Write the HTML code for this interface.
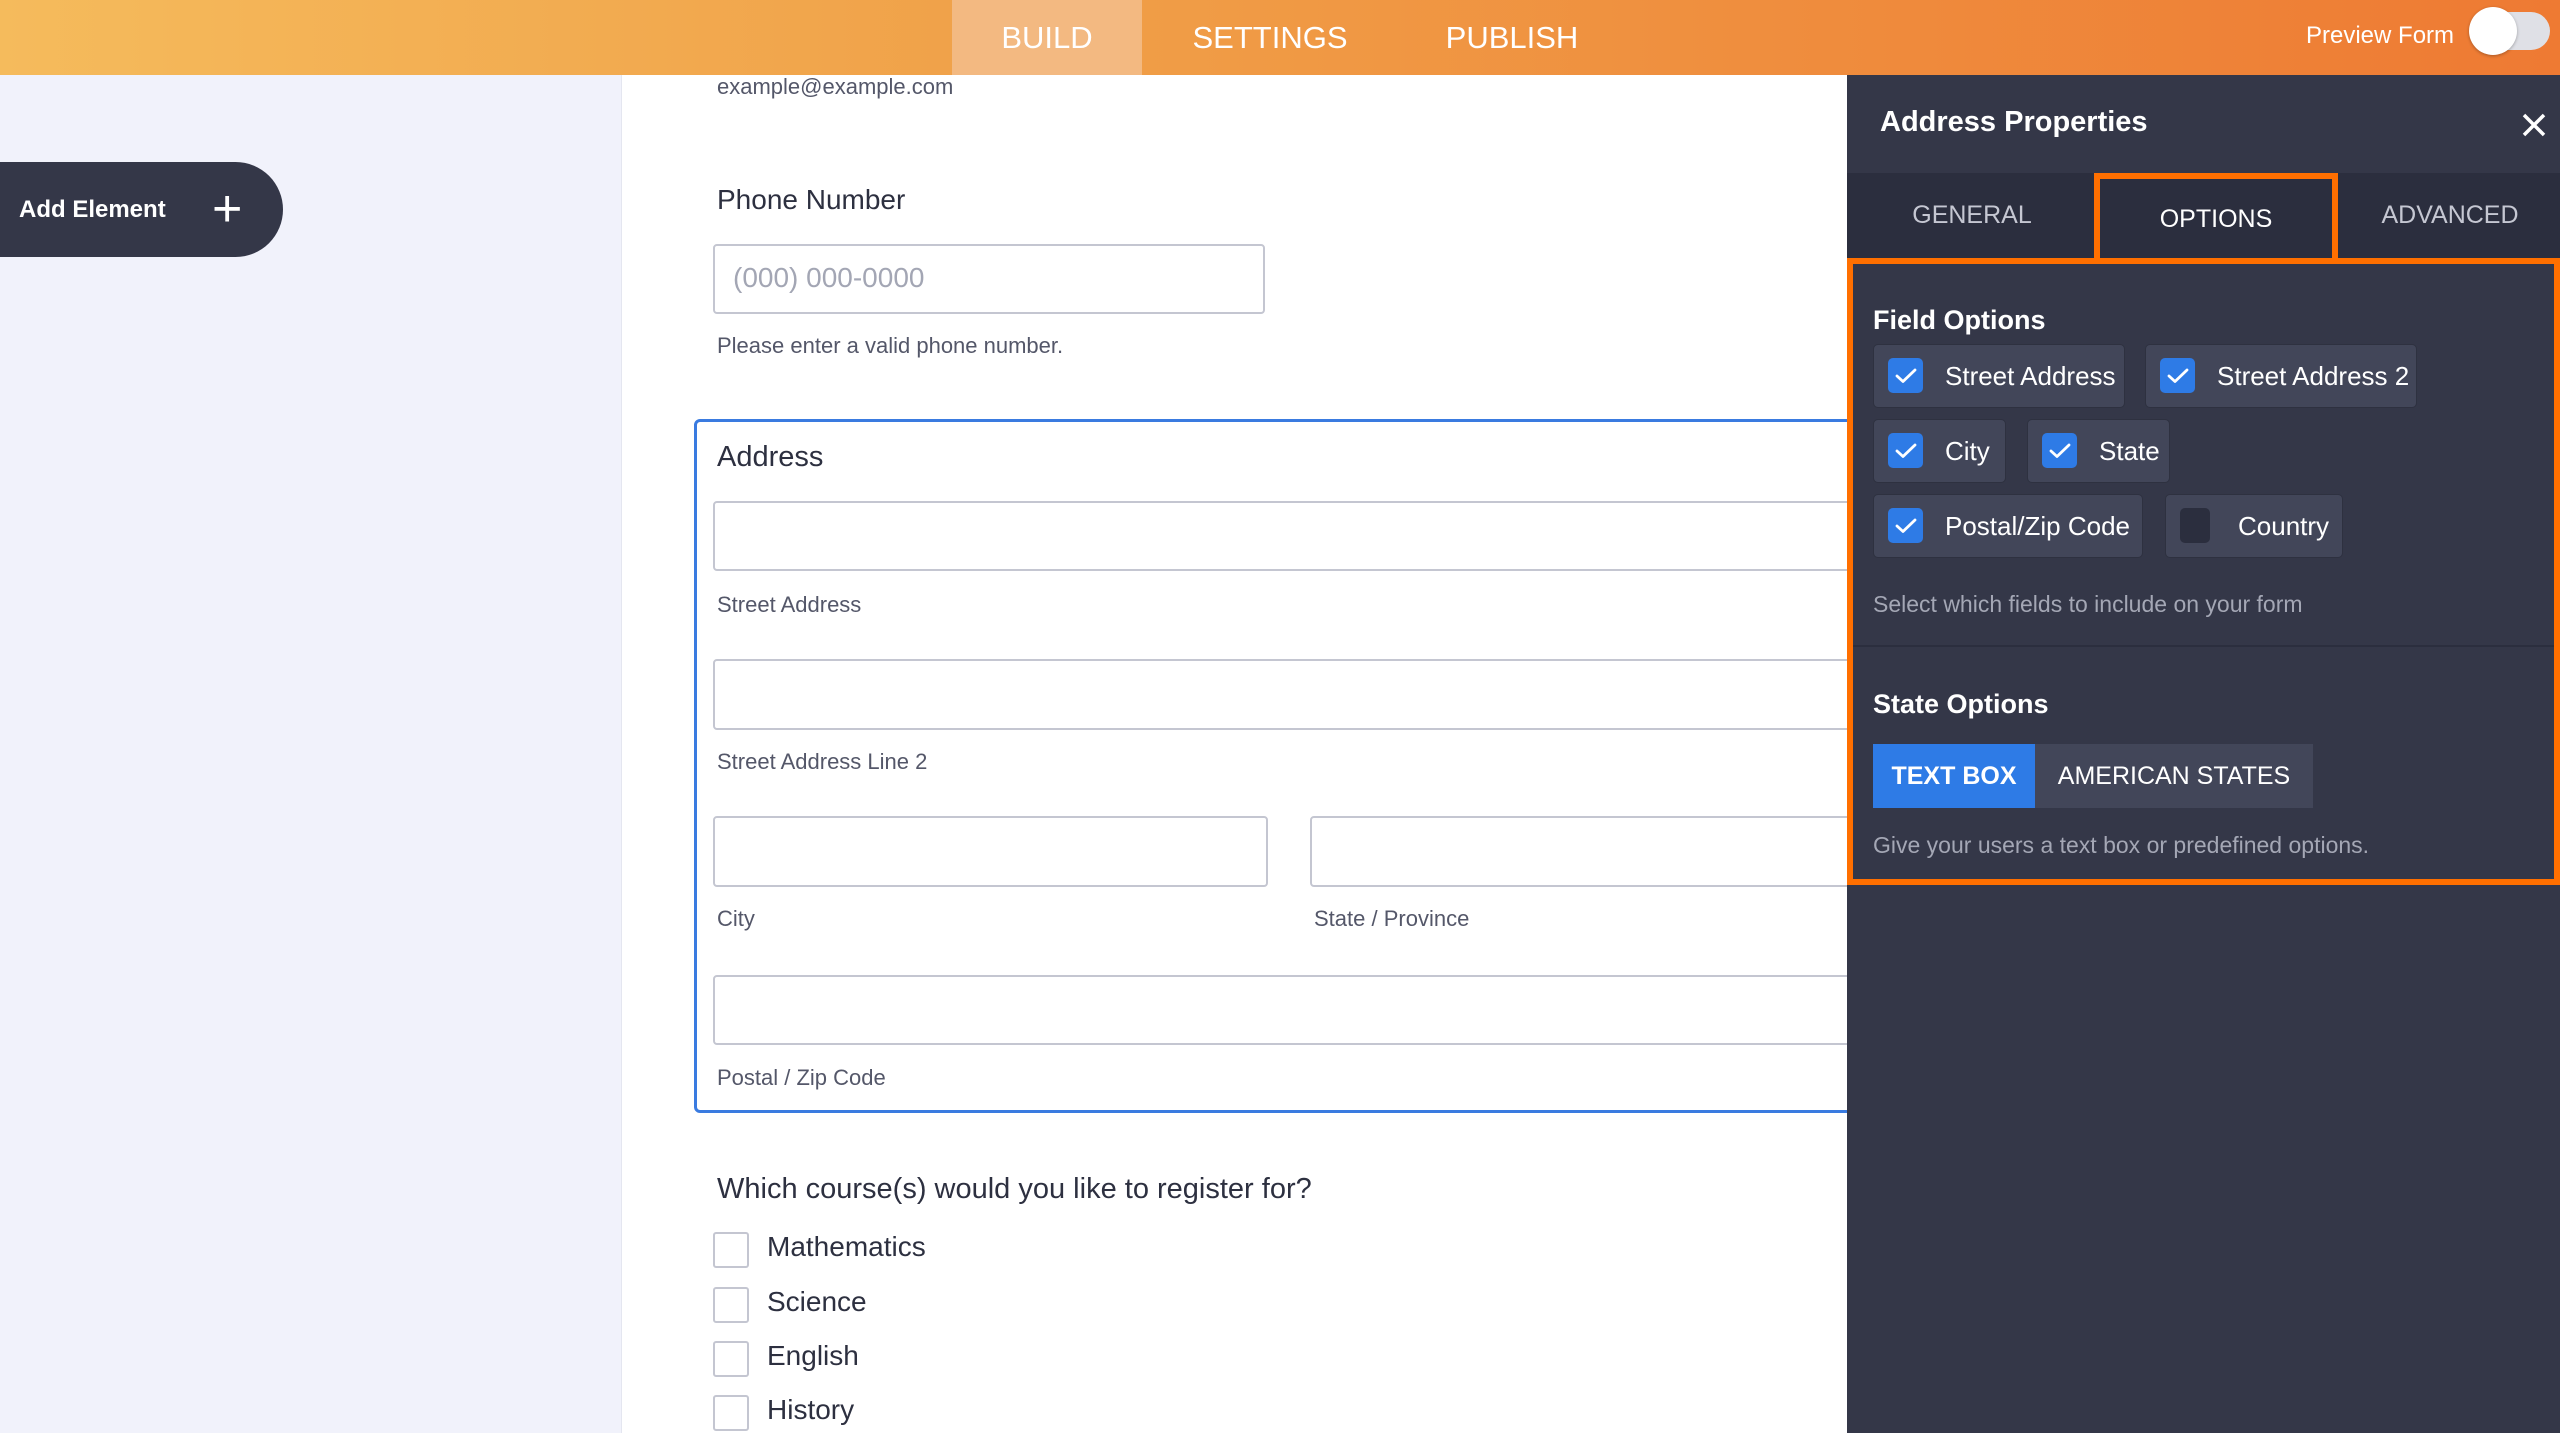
<!DOCTYPE html>
<html><head><meta charset="utf-8"><style>
*{box-sizing:border-box;margin:0;padding:0}
body{width:2560px;height:1433px;overflow:hidden;font-family:"Liberation Sans",sans-serif;background:#fff;position:relative}
.abs{position:absolute}
.hdr{left:0;top:0;width:2560px;height:75px;background:linear-gradient(90deg,#f5bb5c,#f0a048 40%,#ee7a33)}
.tab{top:0;height:75px;line-height:75px;color:#fff;font-size:31px;text-align:center}
.side{left:0;top:75px;width:622px;height:1358px;background:#f1f2fb;border-right:1px solid #e4e6f0}
.pill{left:0;top:162px;width:283px;height:95px;background:#343748;border-radius:0 48px 48px 0;color:#fff;font-size:24px;font-weight:bold;line-height:95px;padding-left:19px}
.lbl{font-size:28px;color:#2d3040}
.sm{font-size:22px;color:#545769}
.inp{border:2px solid #c4c6d1;border-radius:4px;background:#fff}
.panel{left:1847px;top:75px;width:713px;height:1358px;background:#343748}
.chip{height:64px;background:#424659;border:1px solid #2e3140;border-radius:5px;color:#fff;font-size:26px;line-height:62px}
.cb{position:absolute;left:14px;top:13px;width:35px;height:35px;background:#2e7be6;border-radius:5px}
.cb svg{position:absolute;left:7px;top:9px}
.ccb{position:absolute;width:36px;height:36px;border:2px solid #c4c6d1;border-radius:3px;left:713px}
.opt{left:767px;font-size:28px;color:#2d3040}
</style></head><body>
<div class="abs hdr"></div>
<div class="abs tab" style="left:952px;width:190px;background:#f3b981">BUILD</div>
<div class="abs tab" style="left:1170px;width:200px">SETTINGS</div>
<div class="abs tab" style="left:1420px;width:184px">PUBLISH</div>
<div class="abs" style="left:2306px;top:22px;color:#fff;font-size:24px">Preview Form</div>
<div class="abs" style="left:2472px;top:12px;width:78px;height:38px;border-radius:19px;background:#dfe0e6"></div>
<div class="abs" style="left:2469px;top:7px;width:48px;height:48px;border-radius:50%;background:#fff;box-shadow:0 1px 3px rgba(0,0,0,.3)"></div>

<div class="abs side"></div>
<div class="abs pill">Add Element<span style="position:absolute;left:212px;top:0;font-size:52px;font-weight:normal">+</span></div>

<div class="abs sm" style="left:717px;top:74px">example@example.com</div>
<div class="abs lbl" style="left:717px;top:184px">Phone Number</div>
<div class="abs inp" style="left:713px;top:244px;width:552px;height:70px"></div>
<div class="abs" style="left:733px;top:262px;font-size:28px;color:#a3a6b4">(000) 000-0000</div>
<div class="abs sm" style="left:717px;top:333px">Please enter a valid phone number.</div>

<div class="abs" style="left:694px;top:419px;width:1170px;height:694px;border:3px solid #3a7be0;border-radius:6px"></div>
<div class="abs lbl" style="left:717px;top:441px;font-size:29px">Address</div>
<div class="abs inp" style="left:713px;top:501px;width:1160px;height:70px"></div>
<div class="abs sm" style="left:717px;top:592px">Street Address</div>
<div class="abs inp" style="left:713px;top:659px;width:1160px;height:71px"></div>
<div class="abs sm" style="left:717px;top:749px">Street Address Line 2</div>
<div class="abs inp" style="left:713px;top:816px;width:555px;height:71px"></div>
<div class="abs inp" style="left:1310px;top:816px;width:560px;height:71px"></div>
<div class="abs sm" style="left:717px;top:906px">City</div>
<div class="abs sm" style="left:1314px;top:906px">State / Province</div>
<div class="abs inp" style="left:713px;top:975px;width:1160px;height:70px"></div>
<div class="abs sm" style="left:717px;top:1065px">Postal / Zip Code</div>

<div class="abs lbl" style="left:717px;top:1173px;font-size:29px">Which course(s) would you like to register for?</div>
<div class="ccb" style="top:1232px"></div><div class="abs opt" style="top:1231px">Mathematics</div>
<div class="ccb" style="top:1287px"></div><div class="abs opt" style="top:1286px">Science</div>
<div class="ccb" style="top:1341px"></div><div class="abs opt" style="top:1340px">English</div>
<div class="ccb" style="top:1395px"></div><div class="abs opt" style="top:1394px">History</div>

<div class="abs panel"></div>
<div class="abs" style="left:1880px;top:106px;color:#fff;font-size:29px;font-weight:bold">Address Properties</div>
<svg class="abs" style="left:2522px;top:113px" width="24" height="24"><path d="M2 2L22 22M22 2L2 22" stroke="#fff" stroke-width="3.5"/></svg>
<div class="abs" style="left:1847px;top:173px;width:713px;height:85px;background:#2b2e3e"></div>
<div class="abs" style="left:1850px;top:173px;width:244px;height:85px;line-height:85px;text-align:center;color:#c5c7d2;font-size:25px">GENERAL</div>
<div class="abs" style="left:2094px;top:173px;width:244px;height:85px;border:6px solid #ff6f00;border-bottom:none;line-height:80px;text-align:center;color:#fff;font-size:25px">OPTIONS</div>
<div class="abs" style="left:2340px;top:173px;width:220px;height:85px;line-height:85px;text-align:center;color:#c5c7d2;font-size:25px">ADVANCED</div>
<div class="abs" style="left:1847px;top:258px;width:713px;height:627px;border:6px solid #ff6f00"></div>

<div class="abs" style="left:1873px;top:305px;color:#fff;font-size:27px;font-weight:bold">Field Options</div>
<svg width="0" height="0" style="position:absolute"><defs><symbol id="ck" viewBox="0 0 22 17"><path d="M2 9L8 14.5L20 3" fill="none" stroke="#fff" stroke-width="2.8" stroke-linecap="round" stroke-linejoin="round"/></symbol></defs></svg>
<div class="abs chip" style="left:1873px;top:344px;width:252px;padding-left:71px"><span class="cb"><svg width="22" height="17"><use href="#ck"/></svg></span>Street Address</div>
<div class="abs chip" style="left:2145px;top:344px;width:272px;padding-left:71px"><span class="cb"><svg width="22" height="17"><use href="#ck"/></svg></span>Street Address 2</div>
<div class="abs chip" style="left:1873px;top:419px;width:133px;padding-left:71px"><span class="cb"><svg width="22" height="17"><use href="#ck"/></svg></span>City</div>
<div class="abs chip" style="left:2027px;top:419px;width:143px;padding-left:71px"><span class="cb"><svg width="22" height="17"><use href="#ck"/></svg></span>State</div>
<div class="abs chip" style="left:1873px;top:494px;width:270px;padding-left:71px"><span class="cb"><svg width="22" height="17"><use href="#ck"/></svg></span>Postal/Zip Code</div>
<div class="abs chip" style="left:2165px;top:494px;width:178px;padding-left:72px"><span class="cb" style="background:#2b2e3e;width:30px;left:14px"></span>Country</div>
<div class="abs" style="left:1873px;top:591px;color:#a4a7b5;font-size:23px">Select which fields to include on your form</div>
<div class="abs" style="left:1853px;top:645px;width:701px;height:2px;background:#2b2e3e"></div>
<div class="abs" style="left:1873px;top:689px;color:#fff;font-size:27px;font-weight:bold">State Options</div>
<div class="abs" style="left:1873px;top:744px;width:162px;height:64px;background:#2e7be6;color:#fff;font-size:25px;font-weight:bold;line-height:64px;text-align:center">TEXT BOX</div>
<div class="abs" style="left:2035px;top:744px;width:278px;height:64px;background:#424659;color:#fff;font-size:25px;line-height:64px;text-align:center">AMERICAN STATES</div>
<div class="abs" style="left:1873px;top:832px;color:#a4a7b5;font-size:23px">Give your users a text box or predefined options.</div>
</body></html>
